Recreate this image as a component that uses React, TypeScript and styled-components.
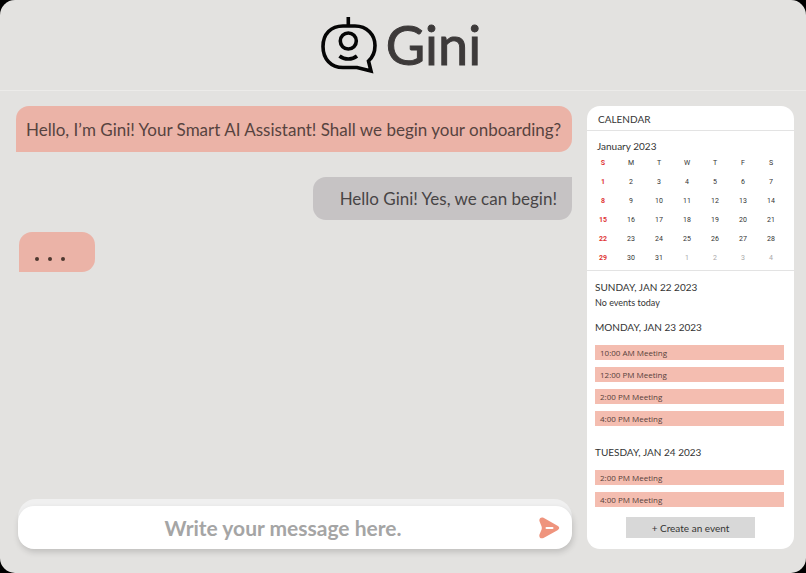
import React from "react";
import styled, { createGlobalStyle, css } from "styled-components";

const GlobalStyle = createGlobalStyle`
  *, *::before, *::after { box-sizing: border-box; }
  body { margin: 0; background: #000; color: #3d3a3a; font-family: Lato, "Open Sans", sans-serif; }
  h1, h2, h3, p, ul { margin: 0; padding: 0; font-weight: 400; }
  button, input { font: inherit; color: inherit; border: 0; }
`;

const Screen = styled.div`
  min-height: 100vh;
  display: flex;
  flex-direction: column;
  background: #e3e2e0;
  border-radius: 15px;
  overflow: hidden;
`;

const Header = styled.header`
  height: 91px;
  display: flex;
  align-items: center;
  justify-content: center;
  gap: 9px;
  padding-right: 4px;
  border-bottom: 1px solid #ecebe9;
`;

const LogoMark = styled.svg`
  width: 56px;
  height: 58px;
  fill: none;
  stroke: #050505;
  stroke-width: 3.6;
`;

const Brand = styled.h1`
  font-size: 54px;
  line-height: 64px;
  color: #3d3a3a;
  -webkit-text-stroke: 1px #3d3a3a;
`;

const Main = styled.main`
  flex: 1;
  display: grid;
  grid-template-columns: minmax(0, 1fr) 207px;
  gap: 15px;
  padding: 15px 12px 24px 16px;
`;

const Chat = styled.section`
  display: flex;
  flex-direction: column;
  justify-content: space-between;
`;

const Messages = styled.div`
  display: flex;
  flex-direction: column;
  align-items: flex-start;
`;

const Bubble = styled.p<{ $from: "bot" | "user" }>`
  font-size: 17px;
  line-height: 23px;
  ${({ $from }) =>
    $from === "bot"
      ? css`
          align-self: stretch;
          padding: 12px 10px 11px;
          border-radius: 13px 13px 13px 0;
          background: #ebb3a7;
          color: #574340;
        `
      : css`
          align-self: flex-end;
          margin-top: 25px;
          padding: 10px 15px 10px 27px;
          border-radius: 13px 0 13px 13px;
          background: #c6c3c4;
          color: #484546;
        `}
`;

const Typing = styled.div`
  display: flex;
  gap: 9px;
  width: 76px;
  height: 40px;
  margin: 12px 0 0 3px;
  padding: 25px 16px 0;
  border-radius: 13px 13px 13px 0;
  background: #ebb3a7;
`;

const Dot = styled.span`
  width: 4px;
  height: 4px;
  border-radius: 50%;
  background: #4d382f;
`;

const ComposerBack = styled.div`
  margin-left: 2px;
  padding-top: 7px;
  border-radius: 18px;
  background: #f0f0f0;
`;

const Composer = styled.form`
  display: flex;
  align-items: center;
  height: 43px;
  padding-right: 12px;
  border-radius: 16px;
  background: #fff;
  box-shadow: 1px 3px 6px rgba(0, 0, 0, 0.16);
`;

const MessageInput = styled.input`
  flex: 1;
  min-width: 0;
  height: 43px;
  padding: 0 0 0 9px;
  background: none;
  outline: none;
  text-align: center;
  font-size: 21px;
  font-weight: 700;
  &::placeholder { color: #a5a5a5; opacity: 1; }
`;

const SendButton = styled.button`
  display: flex;
  padding: 0;
  background: none;
  cursor: pointer;
`;

const Panel = styled.aside`
  border-radius: 13px;
  background: #fff;
  color: #343434;
`;

const PanelTitle = styled.h2`
  padding: 3px 11px 0;
  height: 25px;
  font-size: 10px;
  line-height: 20px;
  border-bottom: 1px solid #e3e3e3;
`;

const MonthSection = styled.section`
  padding: 8px 9px 2px 2px;
  border-bottom: 1px solid #e3e3e3;
`;

const MonthTitle = styled.h3`
  padding-left: 8px;
  font-size: 10px;
  line-height: 15px;
`;

const MonthTable = styled.table`
  width: 100%;
  table-layout: fixed;
  border-collapse: collapse;
  font-family: Roboto, sans-serif;
  font-size: 7px;
  line-height: 19px;
  text-align: center;
`;

const Cell = styled.td<{ $tone: "sunday" | "plain" | "outside" }>`
  height: 19px;
  padding: 0;
  font-weight: ${({ $tone }) => ($tone === "sunday" ? 700 : 400)};
  color: ${({ $tone }) =>
    $tone === "sunday" ? "#e03535" : $tone === "outside" ? "#a9a9a9" : "#333"};
`;

const Agenda = styled.section`
  display: flex;
  flex-direction: column;
  padding: 8px 8px 10px;
`;

const Day = styled.section`
  & + & { margin-top: 8px; }
`;

const DayTitle = styled.h3`
  font-size: 10px;
  line-height: 16px;
`;

const Note = styled.p`
  font-size: 9px;
  line-height: 16px;
`;

const Events = styled.ul`
  display: grid;
  gap: 7px;
  padding: 10px 2px 10px 0;
  list-style: none;
`;

const EventItem = styled.li`
  height: 15px;
  padding-left: 5px;
  background: #f4bdb0;
  color: #573f3b;
  font-family: "Open Sans", sans-serif;
  font-size: 8px;
  line-height: 15px;
`;

const CreateButton = styled.button`
  align-self: center;
  width: 129px;
  height: 21px;
  padding: 0;
  background: #d8d8d8;
  font-size: 10px;
  cursor: pointer;
`;

const weekdays = ["S", "M", "T", "W", "T", "F", "S"];
const weeks = [0, 1, 2, 3, 4].map((w) => weekdays.map((_, d) => w * 7 + d + 1));

const agenda = [
  { title: "SUNDAY, JAN 22 2023", events: [] as string[] },
  {
    title: "MONDAY, JAN 23 2023",
    events: ["10:00 AM Meeting", "12:00 PM Meeting", "2:00 PM Meeting", "4:00 PM Meeting"],
  },
  { title: "TUESDAY, JAN 24 2023", events: ["2:00 PM Meeting", "4:00 PM Meeting"] },
];

export default function App() {
  return (
    <>
      <GlobalStyle />
      <Screen>
        <Header>
          <LogoMark viewBox="0 0 56 58" aria-hidden="true">
            <path d="M27.3 1v9" />
            <path d="M22 10h12C46 10 54 19 54 29.500c0 6.500-2 11.500-6.500 15.500L50 55 36 51.500H22C10 51.500 2 43 2 30.500S10 10 22 10Z" />
            <circle cx="27.300" cy="25" r="8" />
            <path d="M18.500 40c5 4 12.500 4 17.500 0" />
          </LogoMark>
          <Brand>Gini</Brand>
        </Header>
        <Main>
          <Chat aria-label="Chat">
            <Messages>
              <Bubble $from="bot">
                Hello, I’m Gini! Your Smart AI Assistant! Shall we begin your onboarding?
              </Bubble>
              <Bubble $from="user">Hello Gini! Yes, we can begin!</Bubble>
              <Typing role="status" aria-label="Gini is typing">
                <Dot />
                <Dot />
                <Dot />
              </Typing>
            </Messages>
            <ComposerBack>
              <Composer onSubmit={(e) => e.preventDefault()}>
                <MessageInput aria-label="Message" placeholder="Write your message here." />
                <SendButton type="submit" aria-label="Send">
                  <svg width="21" height="22" viewBox="0 0 21 22" aria-hidden="true">
                    <path
                      d="M4.500.8 18.500 8.800q3.500 2.200 0 4.400L4.500 21C1.500 22.200-.3 20 .5 17.500L2.600 12.500q.4-1.500 0-3L.5 4.300C-.2 1.800 1.800-.4 4.500.8Z"
                      fill="#ef947d"
                    />
                    <path d="M7.500 11h6" stroke="#fff" strokeWidth="2" strokeLinecap="round" />
                  </svg>
                </SendButton>
              </Composer>
            </ComposerBack>
          </Chat>
          <Panel aria-label="Calendar">
            <PanelTitle>CALENDAR</PanelTitle>
            <MonthSection>
              <MonthTitle>January 2023</MonthTitle>
              <MonthTable>
                <thead>
                  <tr>
                    {weekdays.map((d, i) => (
                      <Cell as="th" scope="col" key={i} $tone={i === 0 ? "sunday" : "plain"}>
                        {d}
                      </Cell>
                    ))}
                  </tr>
                </thead>
                <tbody>
                  {weeks.map((week) => (
                    <tr key={week[0]}>
                      {week.map((n, i) => (
                        <Cell key={n} $tone={i === 0 ? "sunday" : n > 31 ? "outside" : "plain"}>
                          {n > 31 ? n - 31 : n}
                        </Cell>
                      ))}
                    </tr>
                  ))}
                </tbody>
              </MonthTable>
            </MonthSection>
            <Agenda>
              {agenda.map((day) => (
                <Day key={day.title}>
                  <DayTitle>{day.title}</DayTitle>
                  {day.events.length === 0 ? (
                    <Note>No events today</Note>
                  ) : (
                    <Events>
                      {day.events.map((e) => (
                        <EventItem key={e}>{e}</EventItem>
                      ))}
                    </Events>
                  )}
                </Day>
              ))}
              <CreateButton type="button">+ Create an event</CreateButton>
            </Agenda>
          </Panel>
        </Main>
      </Screen>
    </>
  );
}
